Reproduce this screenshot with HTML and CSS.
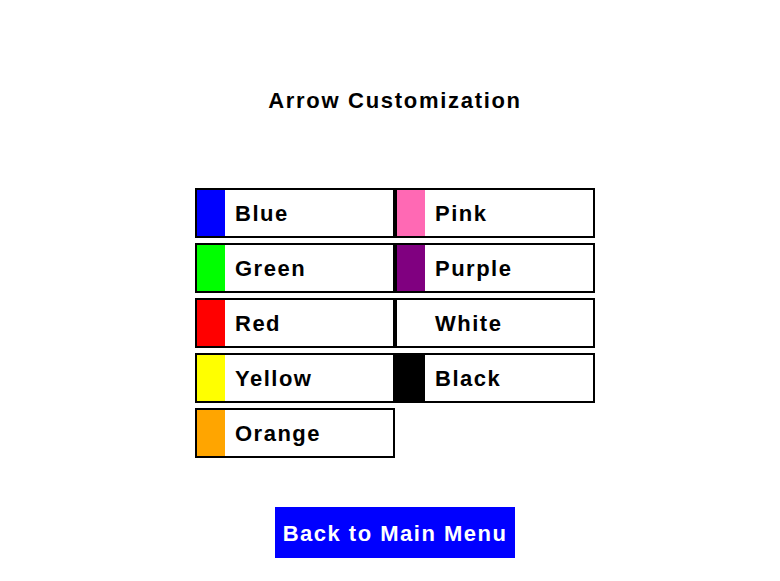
FILE: index.html
```html
<!DOCTYPE html>
<html lang="en">
<head>
    <meta charset="UTF-8">
    <meta name="viewport" content="width=device-width, initial-scale=1.0">
    <title>Arrow Customization</title>
    <link rel="stylesheet" href="styles.css">
</head>
<body>
    <div class="screen">
        <h1>Arrow Customization</h1>
        <div class="color-grid">
            <div class="color-option"><span class="swatch swatch-blue"></span><span class="label">Blue</span></div>
            <div class="color-option"><span class="swatch swatch-pink"></span><span class="label">Pink</span></div>
            <div class="color-option"><span class="swatch swatch-green"></span><span class="label">Green</span></div>
            <div class="color-option"><span class="swatch swatch-purple"></span><span class="label">Purple</span></div>
            <div class="color-option"><span class="swatch swatch-red"></span><span class="label">Red</span></div>
            <div class="color-option"><span class="swatch swatch-white"></span><span class="label">White</span></div>
            <div class="color-option"><span class="swatch swatch-yellow"></span><span class="label">Yellow</span></div>
            <div class="color-option"><span class="swatch swatch-black"></span><span class="label">Black</span></div>
            <div class="color-option"><span class="swatch swatch-orange"></span><span class="label">Orange</span></div>
        </div>
        <button class="back-button">Back to Main Menu</button>
    </div>
</body>
</html>
```

FILE: styles.css
```css
body {
    margin: 0;
    background: #fff;
    font-family: "Liberation Sans", Arial, sans-serif;
}
.screen {
    display: flex;
    flex-direction: column;
    align-items: center;
    padding-left: 10px;
}
h1 {
    margin: 89px 0 0;
    font-size: 22px;
    line-height: 24px;
    letter-spacing: 1.7px;
    font-weight: bold;
    color: #000;
}
.color-grid {
    display: grid;
    grid-template-columns: 200px 200px;
    row-gap: 5px;
    margin-top: 75px;
}
.color-option {
    display: flex;
    align-items: center;
    height: 50px;
    box-sizing: border-box;
    border: 2px solid #000;
}
.swatch {
    width: 28px;
    align-self: stretch;
}
.label {
    padding: 2px 0 0 10px;
    font-size: 22px;
    font-weight: bold;
    letter-spacing: 1.5px;
    color: #000;
}
.swatch-blue { background: #0000ff; }
.swatch-pink { background: #ff69b4; }
.swatch-green { background: #00ff00; }
.swatch-purple { background: #800080; }
.swatch-red { background: #ff0000; }
.swatch-white { background: #fff; }
.swatch-yellow { background: #ffff00; }
.swatch-black { background: #000; }
.swatch-orange { background: #ffa500; }
.back-button {
    margin-top: 49px;
    width: 240px;
    height: 51px;
    border: none;
    padding: 2px 0 0;
    background: #0000ff;
    color: #fff;
    font-family: "Liberation Sans", Arial, sans-serif;
    font-size: 22px;
    font-weight: bold;
    letter-spacing: 1.5px;
}
```
